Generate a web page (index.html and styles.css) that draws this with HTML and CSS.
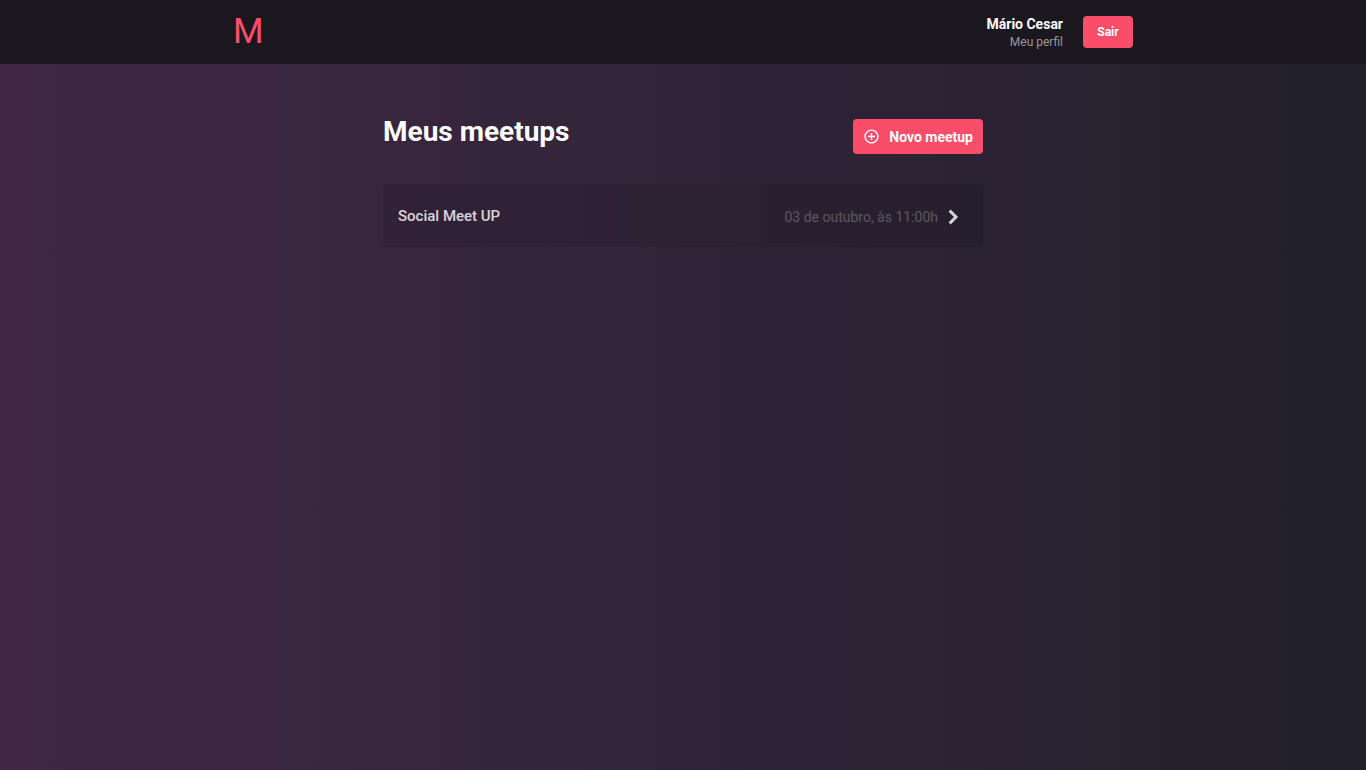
FILE: index.html
```html
<!DOCTYPE html>
<html lang="pt-BR">
<head>
<meta charset="utf-8">
<meta name="viewport" content="width=device-width, initial-scale=1">
<title>Meus meetups</title>
<link rel="stylesheet" href="styles.css">
</head>
<body>
<header class="header">
  <div class="header-content">
    <a class="logo" href="#">M</a>
    <div class="account">
      <div class="profile">
        <strong class="profile-name">Mário Cesar</strong>
        <a class="profile-link" href="#">Meu perfil</a>
      </div>
      <button class="logout" type="button">Sair</button>
    </div>
  </div>
</header>
<main class="content">
  <div class="title-row">
    <h1 class="title">Meus meetups</h1>
    <button class="new-meetup" type="button">
      <svg class="icon-add" viewBox="0 0 24 24" aria-hidden="true"><path d="M13 7h-2v4H7v2h4v4h2v-4h4v-2h-4V7zm-1-5C6.480 2 2 6.480 2 12s4.480 10 10 10 10-4.480 10-10S17.520 2 12 2zm0 18c-4.410 0-8-3.590-8-8s3.590-8 8-8 8 3.590 8 8-3.590 8-8 8z"/></svg>
      Novo meetup
    </button>
  </div>
  <ul class="meetups">
    <li>
      <a class="meetup" href="#">
        <strong class="meetup-name">Social Meet UP</strong>
        <span class="meetup-side">
          <time class="meetup-date">03 de outubro, às 11:00h</time>
          <svg class="icon-chevron" viewBox="0 0 24 24" aria-hidden="true"><path d="M7.500 3.500l8.500 8.500-8.500 8.500"/></svg>
        </span>
      </a>
    </li>
  </ul>
</main>
</body>
</html>
```
FILE: styles.css
```css
* {
  box-sizing: border-box;
  margin: 0;
  padding: 0;
}

body {
  min-height: 100vh;
  background: linear-gradient(-90deg, #22202c, #402845);
  color: #fff;
  font: 14px Roboto, sans-serif;
}

button {
  border: 0;
  border-radius: 4px;
  background: #f94d6a;
  color: #fff;
  font: bold 14px Roboto, sans-serif;
  cursor: pointer;
}

a {
  color: inherit;
  text-decoration: none;
}

.header {
  padding: 0 30px;
  background: #1a171f;
}

.header-content {
  display: flex;
  align-items: center;
  justify-content: space-between;
  max-width: 900px;
  height: 64px;
  margin: 0 auto;
}

.logo {
  color: #f94d6a;
  font-size: 35px;
  line-height: 64px;
}

.account {
  display: flex;
  align-items: center;
  gap: 20px;
}

.profile {
  display: flex;
  flex-direction: column;
  gap: 2px;
  padding-top: 2px;
  text-align: right;
}

.profile-name {
  line-height: 16px;
}

.profile-link {
  color: #999;
  font-size: 12px;
  line-height: 16px;
}

.logout {
  min-width: 50px;
  height: 32px;
  padding: 0 14px;
  font-size: 12px;
}

.content {
  max-width: 600px;
  margin: 50px auto 0;
}

.title-row {
  display: flex;
  align-items: flex-start;
  justify-content: space-between;
  padding-top: 5px;
}

.title {
  font-size: 28px;
  line-height: 26px;
}

.new-meetup {
  display: flex;
  align-items: center;
  gap: 9px;
  height: 35px;
  padding: 0 10px;
  line-height: 16px;
}

.icon-add {
  width: 17px;
  height: 17px;
  fill: currentColor;
}

.meetups {
  display: grid;
  gap: 10px;
  margin-top: 30px;
  list-style: none;
}

.meetup {
  display: flex;
  align-items: center;
  justify-content: space-between;
  height: 63px;
  padding: 0 20px 0 15px;
  border-radius: 4px;
  background: rgba(0, 0, 0, 0.1);
  opacity: 0.8;
}

.meetup-name {
  font-size: 15px;
  font-weight: 500;
}

.meetup-side {
  display: flex;
  align-items: center;
  gap: 5px;
  padding-top: 2px;
}

.meetup-date {
  color: #666;
}

.icon-chevron {
  width: 20px;
  height: 18px;
  fill: none;
  stroke: currentColor;
  stroke-width: 4;
}
```
